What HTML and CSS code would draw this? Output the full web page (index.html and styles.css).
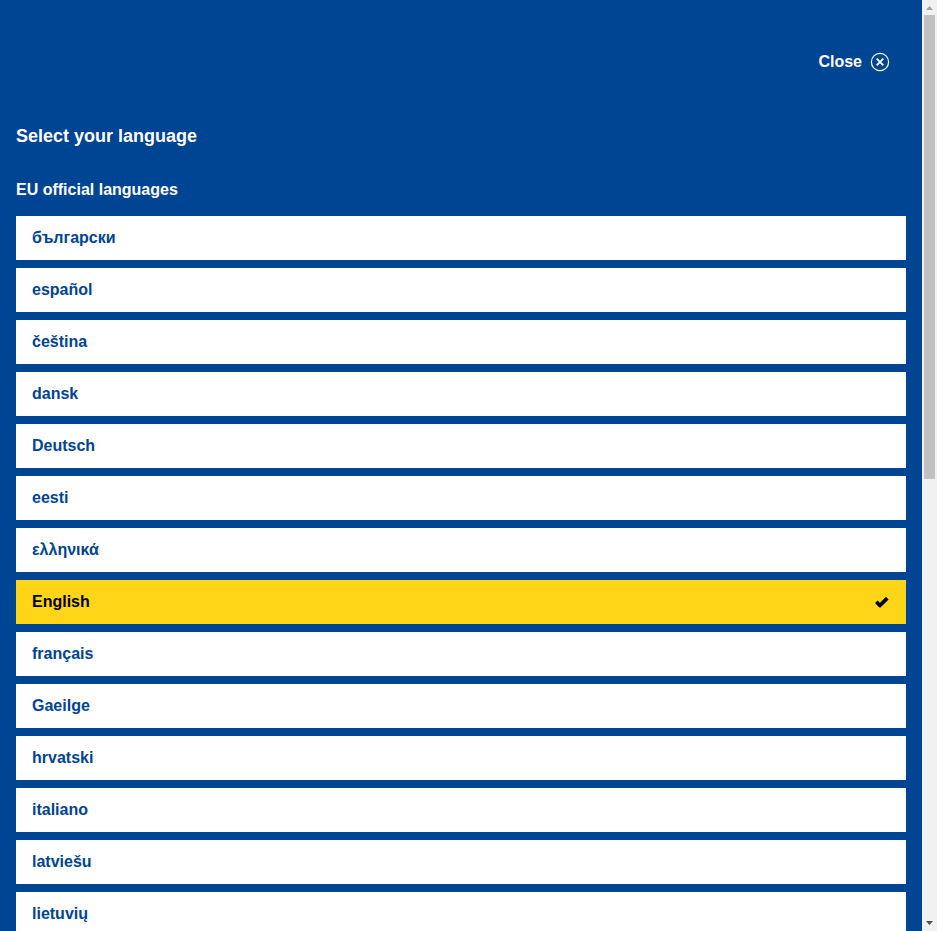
FILE: index.html
```html
<!DOCTYPE html>
<html lang="en">
<head>
<meta charset="utf-8">
<title>Select your language</title>
<link rel="stylesheet" href="styles.css">
</head>
<body>
<main class="panel">
  <header class="bar">
    <button class="close" type="button">Close
      <svg class="close-icon" viewBox="0 0 20 20" width="20" height="20"><circle cx="10" cy="10" r="8.6"/><path class="cross" d="M6.7 6.7l6.6 6.6M13.3 6.7l-6.6 6.6"/></svg>
    </button>
  </header>
  <h1 class="title">Select your language</h1>
  <h2 class="subtitle">EU official languages</h2>
  <ul class="languages">
    <li class="language" lang="bg">български</li>
    <li class="language" lang="es">español</li>
    <li class="language" lang="cs">čeština</li>
    <li class="language" lang="da">dansk</li>
    <li class="language" lang="de">Deutsch</li>
    <li class="language" lang="et">eesti</li>
    <li class="language" lang="el">ελληνικά</li>
    <li class="language selected" lang="en">English
      <svg class="check" viewBox="0 0 16 16" width="16" height="16"><path d="M2.4 7.8l3.5 3.7L13.3 4.2"/></svg>
    </li>
    <li class="language" lang="fr">français</li>
    <li class="language" lang="ga">Gaeilge</li>
    <li class="language" lang="hr">hrvatski</li>
    <li class="language" lang="it">italiano</li>
    <li class="language" lang="lv">latviešu</li>
    <li class="language" lang="lt">lietuvių</li>
  </ul>
</main>
<div class="scrollbar">
  <svg class="arrow up" viewBox="0 0 15 15" width="15" height="15"><path d="M4 10L7.5 6L11 10z"/></svg>
  <div class="thumb"></div>
  <svg class="arrow down" viewBox="0 0 15 15" width="15" height="15"><path d="M4 5L7.5 9L11 5z"/></svg>
</div>
</body>
</html>
```
FILE: styles.css
```css
* { box-sizing: border-box; }
body {
  margin: 0;
  display: flex;
  height: 931px;
  overflow: hidden;
  font-family: Arial, "Liberation Sans", sans-serif;
  font-weight: 700;
  font-size: 16px;
  line-height: 20px;
}
.panel {
  flex: 1;
  padding: 0 16px;
  overflow: hidden;
  background: #004494;
  color: #fff;
}
.bar {
  display: flex;
  justify-content: flex-end;
  padding: 52px 16px 0 0;
}
.close {
  display: flex;
  align-items: center;
  gap: 8px;
  height: 20px;
  padding: 0;
  border: 0;
  background: none;
  color: inherit;
  font: inherit;
}
.close-icon { fill: none; stroke: #fff; stroke-width: 1.2; }
.cross { stroke-width: 1.8; }
.title {
  margin: 52px 0 0;
  font-size: 18px;
  line-height: 24px;
}
.subtitle {
  margin: 32px 0 16px;
  font-size: 16px;
  line-height: 20px;
}
.languages {
  display: flex;
  flex-direction: column;
  gap: 8px;
  margin: 0;
  padding: 0;
  list-style: none;
}
.language {
  display: flex;
  align-items: center;
  justify-content: space-between;
  height: 44px;
  padding: 0 16px;
  background: #fff;
  color: #004494;
}
.selected { background: #ffd617; color: #000; }
.check { fill: none; stroke: #000; stroke-width: 3.8; stroke-linejoin: round; }
.scrollbar {
  display: flex;
  flex-direction: column;
  width: 15px;
  background: #f1f1f1;
}
.thumb {
  height: 464px;
  margin: 0 2px;
  background: #c1c1c1;
}
.arrow { flex: none; }
.up { fill: #a3a3a3; }
.down { margin-top: auto; fill: #505050; }
```
